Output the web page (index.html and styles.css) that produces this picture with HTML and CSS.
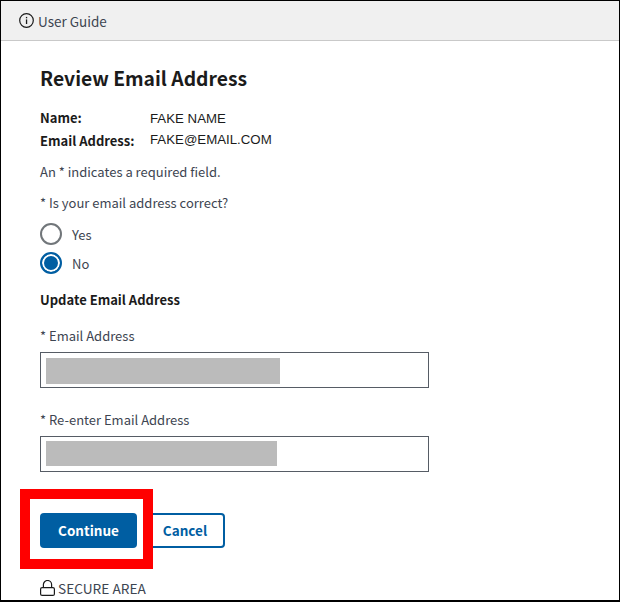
FILE: index.html
```html
<!DOCTYPE html>
<html lang="en">
<head>
<meta charset="utf-8">
<title>Review Email Address</title>
<link rel="stylesheet" href="styles.css">
</head>
<body>
<div class="frame">
  <header class="topbar">
    <svg class="info-icon" width="15" height="15" viewBox="0 0 15 15" aria-hidden="true">
      <circle cx="7.5" cy="7.5" r="6.8" fill="none" stroke="#1b1b1b" stroke-width="1.2"/>
      <rect x="6.9" y="6.4" width="1.3" height="4.6" fill="#1b1b1b"/>
      <rect x="6.9" y="3.9" width="1.3" height="1.4" fill="#1b1b1b"/>
    </svg>
    <span>User Guide</span>
  </header>
  <main class="content">
    <h1 class="title">Review Email Address</h1>
    <div class="summary">
      <div class="summary-row name-row"><span class="key">Name:</span><span class="value">FAKE NAME</span></div>
      <div class="summary-row email-row"><span class="key">Email Address:</span><span class="value">FAKE@EMAIL.COM</span></div>
    </div>
    <p class="note">An * indicates a required field.</p>
    <p class="question">* Is your email address correct?</p>
    <div class="radios">
      <div class="radio-row"><span class="radio"></span><span>Yes</span></div>
      <div class="radio-row"><span class="radio radio-on"></span><span>No</span></div>
    </div>
    <h2 class="subtitle">Update Email Address</h2>
    <label class="field-label">* Email Address</label>
    <div class="input"><span class="redact redact-a"></span></div>
    <label class="field-label second">* Re-enter Email Address</label>
    <div class="input input-tight"><span class="redact redact-b"></span></div>
    <div class="actions">
      <button class="btn btn-primary" type="button">Continue</button>
      <button class="btn btn-outline" type="button">Cancel</button>
      <span class="highlight"></span>
    </div>
    <div class="secure">
      <svg width="15" height="16" viewBox="0 0 15 16" aria-hidden="true">
        <rect x="0.6" y="7.6" width="13.8" height="7.8" rx="1.5" fill="none" stroke="#1b1b1b" stroke-width="1.2"/>
        <path d="M3.4 7.6V4.6a4.1 4.1 0 0 1 8.2 0v3" fill="none" stroke="#1b1b1b" stroke-width="1.2"/>
      </svg>
      <span>SECURE AREA</span>
    </div>
  </main>
</div>
</body>
</html>
```
FILE: styles.css
```css
* { box-sizing: border-box; }
html, body { margin: 0; padding: 0; background: #fff; }
body {
  font-family: "Noto Sans CJK SC", "Source Sans Pro", "Noto Sans", sans-serif;
  font-size: 13px;
  color: #1b1b1b;
  overflow: hidden;
}
.frame {
  width: 620px;
  height: 602px;
  border: 1px solid #000;
  border-bottom-width: 2px;
  overflow: hidden;
}
.topbar {
  height: 40px;
  background: #f0f0f0;
  border-bottom: 1px solid #c9c9c9;
  display: flex;
  align-items: center;
  gap: 4px;
  padding-left: 18px;
  font-size: 13.5px;
  color: #3d4551;
}
.info-icon { flex: none; }
.content { padding: 0 0 0 39px; }
.title {
  margin: 24px 0 0;
  font-size: 19.3px;
  line-height: 26px;
  font-weight: 700;
  color: #1b1b1b;
}
.summary { margin-top: 17px; }
.summary-row { display: flex; }
.name-row { height: 22px; }
.email-row { height: 20px; }
.key { width: 110px; font-weight: 700; line-height: 20px; }
.email-row .key { margin-top: 1px; }
.value {
  font-family: "Liberation Sans", Arial, sans-serif;
  font-size: 13.25px;
  line-height: 20px;
}
.name-row .value { margin-top: 1px; }
.note { margin: 12px 0 0; line-height: 20px; color: #3d4551; }
.question { margin: 11px 0 0; line-height: 20px; color: #3d4551; }
.radios { margin-top: 10px; display: flex; flex-direction: column; gap: 7px; }
.radio-row { display: flex; align-items: center; gap: 10px; height: 22px; color: #3d4551; }
.radio {
  width: 22px;
  height: 22px;
  border-radius: 50%;
  border: 2px solid #71767a;
  background: #fff;
  flex: none;
}
.radio-on {
  border-color: #005ea2;
  background: #005ea2;
  box-shadow: inset 0 0 0 2px #fff;
}
.subtitle {
  margin: 16px 0 0;
  font-size: 13px;
  line-height: 20px;
  font-weight: 700;
}
.field-label { display: block; margin-top: 16px; line-height: 20px; color: #3d4551; }
.field-label.second { margin-top: 22px; }
.input {
  margin-top: 6px;
  width: 389px;
  height: 36px;
  border: 1px solid #565c65;
  padding: 5px;
  display: flex;
}
.input-tight { padding-top: 4px; }
.redact { display: block; background: #bbb; }
.redact-a { width: 234px; height: 26px; }
.redact-b { width: 231px; height: 25px; }
.actions {
  position: relative;
  margin-top: 41px;
  display: flex;
  gap: 8px;
}
.btn {
  height: 35px;
  border-radius: 4px;
  font-family: inherit;
  font-size: 13.5px;
  font-weight: 700;
  padding: 0 0 2px;
}
.btn-primary { width: 97px; background: #005ea2; color: #fff; border: 0; }
.btn-outline { width: 80px; background: #fff; color: #005ea2; border: 2px solid #005ea2; }
.highlight {
  position: absolute;
  left: -20px;
  top: -24px;
  width: 133px;
  height: 80px;
  border: 10px solid #f00;
}
.secure {
  margin-top: 30px;
  display: flex;
  align-items: center;
  gap: 3px;
  font-size: 13.7px;
  line-height: 20px;
  color: #3d4551;
}
```
